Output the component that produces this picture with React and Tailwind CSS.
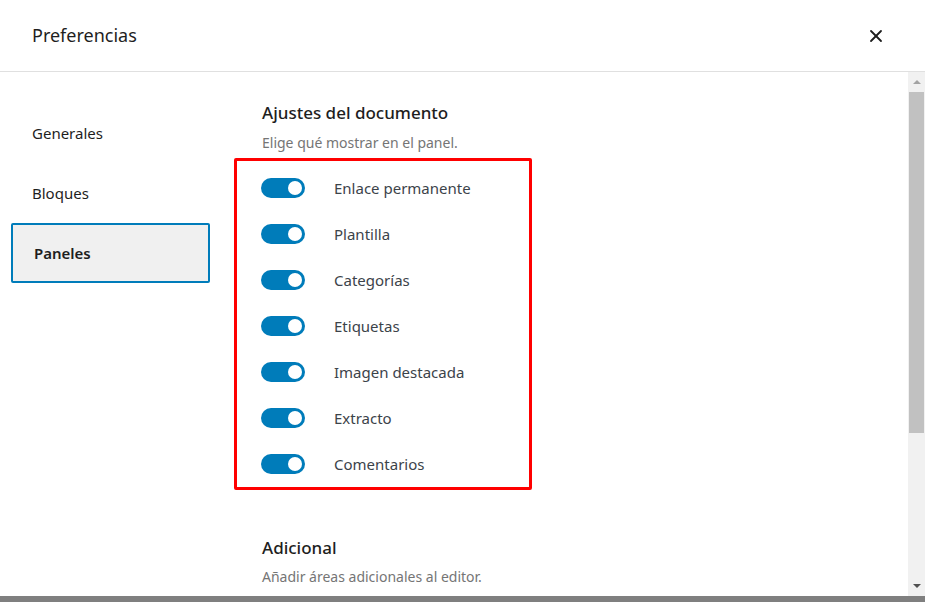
import { X } from 'lucide-react';

const panels = [
  'Enlace permanente',
  'Plantilla',
  'Categorías',
  'Etiquetas',
  'Imagen destacada',
  'Extracto',
  'Comentarios',
];

const tabs = [
  { id: 'general', label: 'Generales' },
  { id: 'blocks', label: 'Bloques' },
  { id: 'panels', label: 'Paneles', active: true },
];

function Toggle() {
  return (
    <span className="flex h-[20px] w-[44px] items-center justify-end rounded-full bg-[#007cba] pr-[3px]">
      <span className="h-[14px] w-[14px] rounded-full bg-white" />
    </span>
  );
}

function Scrollbar() {
  return (
    <div className="flex w-[17px] flex-col items-center bg-[#f1f1f1]">
      <div className="flex h-[20px] w-full items-center justify-center">
        <span className="h-0 w-0 border-x-[4px] border-b-[4px] border-x-transparent border-b-[#a3a3a3]" />
      </div>
      <div className="h-[341px] w-[15px] bg-[#c1c1c1]" />
      <div className="flex-1" />
      <div className="flex h-[20px] w-full items-center justify-center">
        <span className="h-0 w-0 border-x-[4px] border-t-[4px] border-x-transparent border-t-[#505050]" />
      </div>
    </div>
  );
}

export default function App() {
  return (
    <div
      className="flex h-[602px] w-[925px] flex-col overflow-hidden bg-white text-[#1e1e1e]"
      style={{ fontFamily: '"Noto Sans", "Open Sans", sans-serif' }}
    >
      <header className="flex h-[72px] shrink-0 items-center justify-between border-b border-[#e0e0e0] pl-[32px] pr-[37px]">
        <h1 className="text-[18px] font-normal">Preferencias</h1>
        <button className="flex h-[24px] w-[24px] items-center justify-center text-[#1e1e1e]">
          <X size={20} strokeWidth={2.2} />
        </button>
      </header>

      <div className="flex min-h-0 flex-1">
        <nav className="w-[234px] shrink-0 pl-[11px] pt-[31px]">
          {tabs.map(t => (
            <div
              key={t.id}
              className={`flex h-[60px] w-[199px] items-center rounded-[2px] pl-[21px] text-[15px] ${
                t.active ? 'border-2 border-[#007cba] bg-[#f0f0f0] pl-[19px] font-semibold' : ''
              }`}
            >
              {t.label}
            </div>
          ))}
        </nav>

        <main className="min-w-0 flex-1 pl-[28px] pt-[28px]">
          <h2 className="text-[17px] font-medium leading-[26px]">Ajustes del documento</h2>
          <p className="mt-[7px] text-[14px] leading-[20px] text-[#757575]">Elige qué mostrar en el panel.</p>

          <div className="ml-[-28px] mt-[5px] w-[298px] rounded-[2px] border-[3px] border-[#ff0000] pl-[24px] pt-[4px]">
            {panels.map(p => (
              <div key={p} className="flex h-[46px] items-center gap-[29px]">
                <Toggle />
                <span className="text-[15px] text-[#3c434a]">{p}</span>
              </div>
            ))}
          </div>

          <h2 className="mt-[45px] text-[17px] font-medium leading-[26px]">Adicional</h2>
          <p className="mt-[6px] text-[14px] leading-[20px] text-[#757575]">Añadir áreas adicionales al editor.</p>
        </main>

        <Scrollbar />
      </div>

      <div className="h-[6px] shrink-0 bg-[#7f7f7f]" />
    </div>
  );
}
